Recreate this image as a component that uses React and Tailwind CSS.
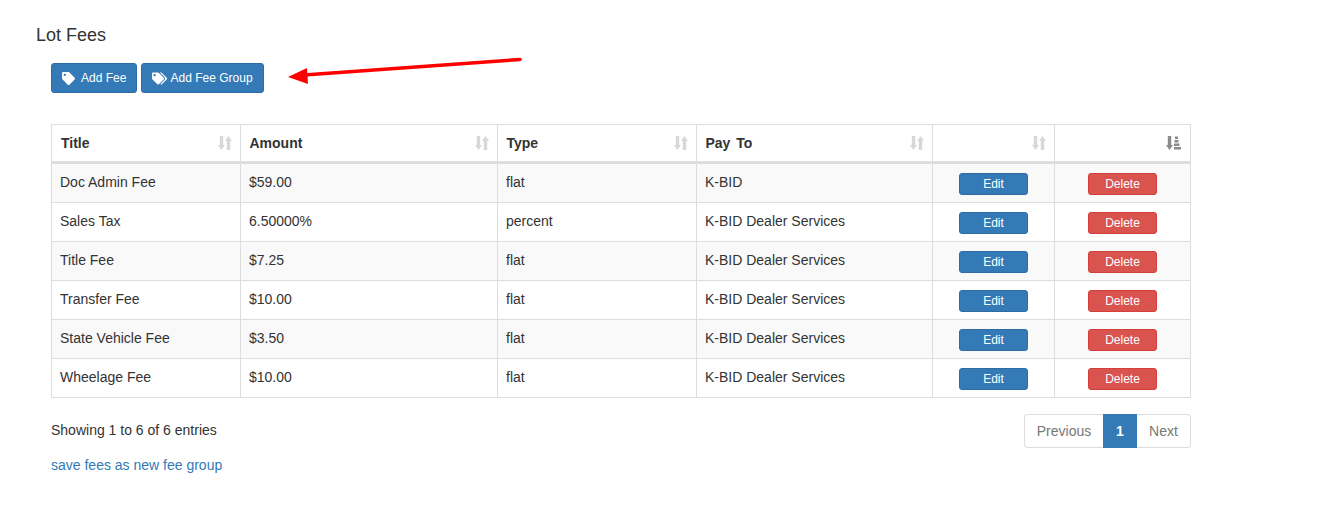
import React from "react";
import { FaTag, FaTags } from "react-icons/fa";

const fees = [
  { title: "Doc Admin Fee", amount: "$59.00", type: "flat", payTo: "K-BID" },
  { title: "Sales Tax", amount: "6.50000%", type: "percent", payTo: "K-BID Dealer Services" },
  { title: "Title Fee", amount: "$7.25", type: "flat", payTo: "K-BID Dealer Services" },
  { title: "Transfer Fee", amount: "$10.00", type: "flat", payTo: "K-BID Dealer Services" },
  { title: "State Vehicle Fee", amount: "$3.50", type: "flat", payTo: "K-BID Dealer Services" },
  { title: "Wheelage Fee", amount: "$10.00", type: "flat", payTo: "K-BID Dealer Services" },
];

// sort glyph: down arrow + up arrow
const SortIcon = () => (
  <svg width="14" height="14" viewBox="0 0 14 14" className="translate-x-[1px] text-[#d8d8d8]" fill="currentColor">
    <path d="M1.800 0h3.400v9h1.800l-3.500 5L0 9h1.800z" />
    <path d="M8.800 14h3.400V5H14L10.500 0 7 5h1.800z" />
  </svg>
);

// active sort glyph: down arrow + stepped bars
const SortActiveIcon = () => (
  <svg width="15" height="14" viewBox="0 0 15 14" className="text-[#8a8a8a]" fill="currentColor">
    <path d="M1.800 0h3.400v9h1.800l-3.500 5L0 9h1.800z" />
    <rect x="9" y="0.500" width="3" height="2.500" />
    <rect x="8.500" y="4" width="4" height="2.500" />
    <rect x="8" y="7.500" width="5.500" height="2.500" />
    <rect x="8" y="11" width="7" height="2.500" />
  </svg>
);

const HeadCell = ({ label, width, active }) => (
  <th className={`${width} h-[38px] border border-[#dddddd] border-b-[3px] pl-[8.500px] pr-[9px] text-left align-middle font-bold first:pl-[9px]`}>
    <div className="flex items-center justify-between">
      <span className="text-[14px] [word-spacing:2px]">{label}</span>
      {active ? <SortActiveIcon /> : <SortIcon />}
    </div>
  </th>
);

const App = () => {
  return (
    <div className="relative h-[509px] w-[1334px] overflow-hidden bg-white font-['Liberation_Sans',Arial,sans-serif] text-[14px] text-[#333333]">
      {/* Red annotation arrow */}
      <svg className="absolute left-0 top-0" width="1334" height="509" fill="none">
        <path d="M520 59.500L304 75" stroke="#fe0000" strokeWidth="3.500" strokeLinecap="round" />
        <path d="M288 77l19-9 1 16z" fill="#fe0000" />
      </svg>

      <div className="pl-9 pt-[25px]">
        <h4 className="text-[18px] leading-[20px]">Lot Fees</h4>
      </div>

      <div className="ml-[51px] mt-[18px] flex gap-1">
        <button className="flex h-[30px] w-[86px] items-center rounded-[3px] border border-[#2e6da4] bg-[#337ab7] pl-[10px] text-[12px] text-white">
          <FaTag className="mr-[6px] text-[13px]" />
          Add Fee
        </button>
        <button className="flex h-[30px] w-[123px] items-center rounded-[3px] border border-[#2e6da4] bg-[#337ab7] pl-[10px] text-[12px] text-white">
          <FaTags className="mr-[3.500px] text-[15px]" />
          Add Fee Group
        </button>
      </div>

      <div className="ml-[51px] mt-[31px] w-[1140px]">
        <table className="w-[1139px] table-fixed border-collapse">
          <thead>
            <tr>
              <HeadCell label="Title" width="w-[189px]" />
              <HeadCell label="Amount" width="w-[257px]" />
              <HeadCell label="Type" width="w-[199px]" />
              <HeadCell label="Pay To" width="w-[236px]" />
              <HeadCell label="" width="w-[122px]" />
              <HeadCell label="" width="w-[136px]" active />
            </tr>
          </thead>
          <tbody>
            {fees.map((fee, i) => (
              <tr
                key={fee.title}
                className={`${i === 0 ? "h-[40px]" : "h-[39px]"} ${i % 2 === 0 ? "bg-[#f9f9f9]" : "bg-white"}`}
              >
                <td className="border border-[#dddddd] px-[8px] pb-[2px]">{fee.title}</td>
                <td className="border border-[#dddddd] px-[8px] pb-[2px]">{fee.amount}</td>
                <td className="border border-[#dddddd] px-[8px] pb-[2px]">{fee.type}</td>
                <td className="border border-[#dddddd] px-[8px] pb-[2px]">{fee.payTo}</td>
                <td className="border border-[#dddddd] px-[8px] pt-[2px] text-center">
                  <button className="h-[22px] w-[69px] rounded-[3px] border border-[#2e6da4] bg-[#337ab7] text-[12px] leading-[18px] text-white">
                    Edit
                  </button>
                </td>
                <td className="border border-[#dddddd] px-[8px] pt-[2px] text-center">
                  <button className="h-[22px] w-[69px] rounded-[3px] border border-[#d43f3a] bg-[#d9534f] text-[12px] leading-[18px] text-white">
                    Delete
                  </button>
                </td>
              </tr>
            ))}
          </tbody>
        </table>

        <div className="mt-[16px] flex items-start justify-between">
          <div className="pt-[6px] leading-[20px]">Showing 1 to 6 of 6 entries</div>
          <div className="flex h-[34px] items-stretch">
            <span className="flex w-[79px] items-center justify-center rounded-l-[4px] border border-r-0 border-[#dddddd] text-[#777777]">
              Previous
            </span>
            <span className="flex w-[34px] items-center justify-center bg-[#337ab7] font-bold text-white">1</span>
            <span className="flex w-[54px] items-center justify-center rounded-r-[4px] border border-l-0 border-[#dddddd] text-[#777777]">
              Next
            </span>
          </div>
        </div>

        <a className="mt-[7px] block leading-[20px] text-[#337ab7]">save fees as new fee group</a>
      </div>
    </div>
  );
};

export default App;
